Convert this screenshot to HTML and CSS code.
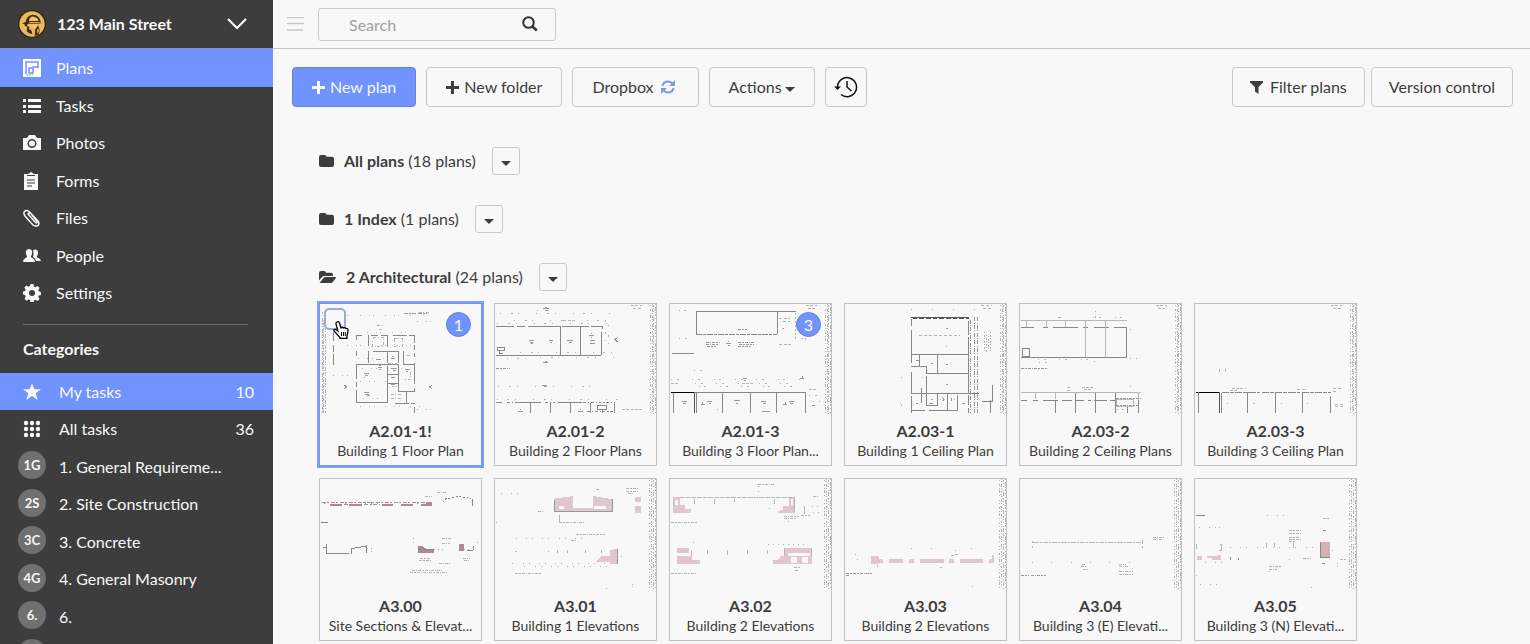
FILE: index.html
```html
<!DOCTYPE html>
<html lang="en">
<head>
<meta charset="utf-8">
<title>123 Main Street – Plans</title>
<link rel="stylesheet" href="styles.css">
</head>
<body>
<svg class="defs" aria-hidden="true">
  <symbol id="folder" viewBox="0 0 16 16"><path d="M0 4q0-2 2-2h3.500q2 0 2 1.800H13q2 0 2 2V12q0 2-2 2H2q-2 0-2-2z"/></symbol>
  <symbol id="folder-open" viewBox="0 0 18 16"><path d="M0 11.500V4q0-2 2-2h3q2 0 2 1.800h5q2 0 2 2V7H5.500Q4 7 3 8z"/><path d="M1 13.500 4.500 9q.7-1 2-1H16q1.500 0 .7 1.200L13.800 13q-.8 1-2 1H1.500q-1 0-.5-.5z"/></symbol>
  <symbol id="plus" viewBox="0 0 13 13"><path d="M5 0h3v5h5v3H8v5H5V8H0V5h5z"/></symbol>
  <symbol id="caret" viewBox="0 0 10 5"><path d="M0 0h10L5 5z"/></symbol>
  <symbol id="margin" viewBox="0 0 24 330">
    <path class="lt" stroke-dasharray="3 9 6 6 3 3 9 6 3 12 3 6" d="M4 3v327"/>
    <path class="lt" stroke-dasharray="3 3 3 6 9 3 3 6 6 3" d="M10 0v330"/>
    <path class="lt" stroke-dasharray="6 3 3 6 3 9 3 3 12 6" d="M15 2v328"/>
    <path class="lt" stroke-dasharray="3 6 12 3 3 3 6 6 3 9" d="M21 0v330"/>
  </symbol>
</svg>

<div class="app">
  <aside class="sidebar">
    <button class="project" type="button">
      <svg class="logo" viewBox="0 0 84 84"><circle cx="42" cy="42" r="40" fill="#e9b95a" stroke="#2f2414" stroke-width="4"/><path d="M12 42q6-5 11-6 3-20 21-22 21 1 24 22l-1 5H30q-3 4-3 7l7 2-1 8 7 3 3 12q-12-2-17-10l2-13-7-2-2-6z" fill="#3a2c18"/><path d="M33 30q4-12 15-10 12 3 14 13H33zM34 36l32 1-1 3-31-1z" fill="#f0c36b"/><path d="M40 44h22l-3 10-8 3-3-5h-6z" fill="#f3c878"/><path d="m52 58 8-12 5 14-3 14-12 4z" fill="#3a2c18"/><path d="m57 60 4-5 2 8-4 9z" fill="#e9b95a"/></svg>
      <span class="project-name">123 Main Street</span>
      <svg class="chevron" viewBox="0 0 20 12"><path d="m1 1 9 9 9-9" fill="none" stroke="#fff" stroke-width="2"/></svg>
    </button>

    <nav class="menu" aria-label="Project">
      <a class="item active" href="#"><svg class="nav-icon" viewBox="0 0 18 18"><path fill="#fff" d="M0 0h18v18H0z"/><path d="M3 15V3h12v5h-5v6H6V9h3" fill="none" stroke="#7093ff" stroke-width="1.500"/><path d="M3 16h7M15 8v1" stroke="#7093ff" stroke-dasharray="2 1"/></svg>Plans</a>
      <a class="item" href="#"><svg class="nav-icon" viewBox="0 0 18 18"><path d="M0 2h3v3H0zM5 2h13v3H5zM0 8h3v3H0zM5 8h13v3H5zM0 13h3v3H0zM5 13h13v3H5z"/></svg>Tasks</a>
      <a class="item" href="#"><svg class="nav-icon" viewBox="0 0 18 18"><path fill-rule="evenodd" d="M0 4h4l2-3h6l2 3h4v12H0zM9 5a4.500 4.500 0 1 0 0 9 4.500 4.500 0 0 0 0-9zm0 1.500a3 3 0 1 1 0 6 3 3 0 0 1 0-6z"/></svg>Photos</a>
      <a class="item" href="#"><svg class="nav-icon" viewBox="0 0 18 18"><path d="M1 2h4l3-2 3 2h4v16H1z"/><path d="M4 3.500h8M4 8h8M4 11h8M4 14h5" stroke="#3d3d3d" fill="none"/></svg>Forms</a>
      <a class="item" href="#"><svg class="nav-icon" viewBox="0 0 18 18"><path d="m5 5 7.500 8.500q1.500 1 2-.5L7 3.500Q4 0 1.500 2.500 0 4 2 7l7.500 8.500Q12 18 15 16.500q2-2 0-4.500L8 4.500Q6 3.500 5 5z" fill="none" stroke="#f8f8f8" stroke-width="1.500"/></svg>Files</a>
      <a class="item" href="#"><svg class="nav-icon" viewBox="0 0 18 18"><path d="M0 15q0-3 2.500-4 2-.6 1.500-2Q2.500 7 3 4q.6-2 3-2t3 2q.5 3-1 5-.3 1.500 1.500 2 2.500 1 2.500 4z"/><path d="M10 3.500q1-1.300 2.800-1 2.700.5 2.300 3.500-.2 2-1.300 3.200-.2 1.300 1.500 1.800 2.500.8 2.700 3h-5q-.5-3-3-4 1-4 0-6.500z"/></svg>People</a>
      <a class="item" href="#"><svg class="nav-icon" viewBox="0 0 18 18"><path fill-rule="evenodd" d="M7.500 0h3l.5 2.500 1.500.7L14.600 2l2 2-1.300 2 .7 1.500 2.500.5v3l-2.500.5-.7 1.500 1.300 2-2 2-2.100-1.300-1.500.7-.5 2.100h-3L7 16l-1.500-.6-2 1.300-2-2 1.200-2.100L2 11 0 10.500v-3L2 7l.6-1.500-1.200-2 2-2 2.100 1.200L7 2zM9 6a3 3 0 1 0 0 6 3 3 0 0 0 0-6z"/></svg>Settings</a>
    </nav>

    <h2 class="categories-title">Categories</h2>
    <nav class="menu tasks" aria-label="Categories">
      <a class="item active" href="#"><span class="mark"><svg class="nav-icon" viewBox="0 0 18 18"><path d="m9 0 2.300 6.300H18l-5.300 4 2 6.700L9 13l-5.700 4 2-6.700L0 6.300h6.700z"/></svg></span><span class="name">My tasks</span><span class="count">10</span></a>
      <a class="item" href="#"><span class="mark"><svg class="nav-icon" viewBox="0 0 18 18"><circle cx="3" cy="3" r="2.200"/><circle cx="9" cy="3" r="2.200"/><circle cx="15" cy="3" r="2.200"/><circle cx="3" cy="9" r="2.200"/><circle cx="9" cy="9" r="2.200"/><circle cx="15" cy="9" r="2.200"/><circle cx="3" cy="15" r="2.200"/><circle cx="9" cy="15" r="2.200"/><circle cx="15" cy="15" r="2.200"/></svg></span><span class="name">All tasks</span><span class="count">36</span></a>
      <a class="item" href="#"><span class="mark round">1G</span><span class="name">1. General Requireme...</span></a>
      <a class="item" href="#"><span class="mark round">2S</span><span class="name">2. Site Construction</span></a>
      <a class="item" href="#"><span class="mark round">3C</span><span class="name">3. Concrete</span></a>
      <a class="item" href="#"><span class="mark round">4G</span><span class="name">4. General Masonry</span></a>
      <a class="item" href="#"><span class="mark round">6.</span><span class="name">6.</span></a>
      <a class="item" href="#" aria-label="More categories"><span class="mark round"></span></a>
    </nav>
  </aside>

  <div class="page">
    <header class="topbar">
      <button class="toggle" type="button" aria-label="Toggle sidebar"><svg viewBox="0 0 17 14"><path d="M0 .5h17M0 6.500h17M0 13h16" stroke="#c8c8c8" stroke-width="1.500"/></svg></button>
      <form class="search">
        <input type="text" placeholder="Search" aria-label="Search">
        <button type="button" aria-label="Run search"><svg viewBox="0 0 16 16"><circle cx="6.500" cy="6.500" r="5.300" fill="none" stroke="#333" stroke-width="2"/><path d="m10.500 10.500 4.300 4" stroke="#333" stroke-width="2.500"/></svg></button>
      </form>
    </header>

    <main class="content">
      <div class="toolbar">
        <button class="btn primary" type="button"><svg class="plus"><use href="#plus"/></svg>New plan</button>
        <button class="btn" type="button"><svg class="plus"><use href="#plus"/></svg>New folder</button>
        <button class="btn dropbox" type="button">Dropbox<svg class="sync" viewBox="0 0 14 14"><path d="M1.500 6Q2.500 1.500 7 1.500q3 0 4.500 2.500M12.500 8Q11.500 12.500 7 12.500 4 12.500 2.500 10" fill="none" stroke="#7d9be0" stroke-width="2"/><path d="M14 0v6H8zM0 14V8h6z" fill="#7d9be0"/></svg></button>
        <button class="btn actions" type="button">Actions<svg class="caret"><use href="#caret"/></svg></button>
        <button class="btn square" type="button" aria-label="History"><svg viewBox="0 0 24 22"><path d="M3.500 11A9.500 9.500 0 1 1 7 18.500M13 5v6l4.500 4" fill="none" stroke="#111" stroke-width="1.500"/><path d="M0 10.500h7L3.500 14z" fill="#111"/></svg></button>
        <span class="spacer"></span>
        <div class="group">
          <button class="btn tight" type="button"><svg class="filter" viewBox="0 0 13 13"><path d="M0 0h13v1.500L8.500 6v7L5 10.500V6L0 1.500z"/></svg>Filter plans</button>
          <button class="btn tight" type="button">Version control</button>
        </div>
      </div>

      <div class="folders">
        <div class="folder"><svg class="folder-icon"><use href="#folder"/></svg><p><b>All plans</b> (18 plans)</p><button type="button" aria-label="All plans options"><svg class="caret"><use href="#caret"/></svg></button></div>
        <div class="folder"><svg class="folder-icon"><use href="#folder"/></svg><p><b>1 Index</b> (1 plans)</p><button type="button" aria-label="1 Index options"><svg class="caret"><use href="#caret"/></svg></button></div>
        <div class="folder"><svg class="folder-icon open"><use href="#folder-open"/></svg><p><b>2 Architectural</b> (24 plans)</p><button type="button" aria-label="2 Architectural options"><svg class="caret"><use href="#caret"/></svg></button></div>
      </div>

      <div class="plans">
        <article class="card selected">
          <svg class="thumb" viewBox="30 28 483 330">
            <g class="lt"><path stroke-dasharray="6 3 3 6 12 3" d="M36 52v304M47 100v256"/><path stroke-dasharray="3 3 9 4" d="M41 75v281"/>
              <path stroke-dasharray="9 4 3 6" d="M326 52h30M202 92h17M206 104h14M190 128h30v26h-34zM252 130h26v24h-26zM290 182h14M234 205h26M284 225h16v30h-16M246 275h18M242 300h34M242 310h34"/>
              <path stroke-dasharray="3 24 3 11 3 31" d="M74 62h250M170 112h150M110 122h210M110 152h220M145 190h80M156 220h140M70 243h50M150 260h90M160 310h60M150 335h180M320 80h60M320 345h50"/></g>
            <path class="md" stroke-dasharray="12 3 5 3" d="M282 57h36M324 57h26"/>
            <path class="ln" d="M139 122v14M139 122h18M175 120v35M184 123h20M214 123h18v35M248 122h40M298 122h14v22M312 152v14M312 176v12M312 205v62M312 279v12M312 336v20M140 170v13M175 170v36M190 170h75v36M233 172v34M281 170v38h30M140 208h125v82h48M140 208v44M140 262v16M140 286v37M233 214v110h-94M254 325h42M302 325h12M290 292v32M233 238h32M233 265h32M70 111v28M70 150v22M70 177v34"/>
            <g class="md"><path d="M162 236h14M164 242h9M161 247h4M162 293h15M165 298h12M171 302h8M205 218h11M208 213h5M208 223h4M102 271l8 6-8 6M367 271l-9 6 9 6M285 225h13M289 230h5M243 191h12M245 186h8M197 195h16M244 222h14M248 228h9M244 248h12M244 270h10"/></g>
          </svg>
          <input class="tick" type="checkbox" aria-label="Select A2.01-1!">
          <span class="badge">1</span>
          <svg class="pointer" viewBox="0 0 16 18"><path d="M4 1q2-1 2.500 1L8 7q1.500-1.500 2.500 0 1.600-1 2.300.5 2.200-.5 2.200 2l-1 6v2H7v-1L1 10q-.5-2 1.500-1.500L5 10 3 3q-.3-1.400 1-2z" fill="#fff" stroke="#000" stroke-width="1.300"/><path d="M8.500 11v4M10.500 11v4M12.300 11v4" stroke="#000"/></svg>
          <h3>A2.01-1!</h3><p>Building 1 Floor Plan</p>
        </article>

        <article class="card">
          <svg class="thumb" viewBox="555 28 483 330">
            <use href="#margin" x="1016" y="28" width="24" height="330"/>
            <path class="ln" d="M558 94h54M620 94h26M655 94h94M755 94h82M842 94h34v10M558 181h316M875 112v69M752 94v87M811 94v87M562 158h20v10h-20zM568 168v8h10M558 324h19M625 324h68M745 324h70M661 324v32M721 324v32M781 324v32M840 324v32M913 324v32M862 333h28v10h-28zM877 343v13"/>
            <path class="ln" stroke-dasharray="8 6 4 5" d="M592 324h33M705 324h34M820 324h96M832 350h82"/>
            <g class="md"><path d="M700 42h16M704 37h8M704 47h7M700 204h14M704 199h7M697 271h14M701 276h6M657 137h15M660 142h9M664 147h5M716 137h14M720 142h6M772 136h18M778 142h7M838 122h13M842 117h5M842 127h5M840 138h14M840 146h14M923 129l-9 6 9 6M625 350h14M630 345h4M805 350h14M810 345h4"/><path stroke-dasharray="9 3 5 3" d="M558 222h42"/></g>
            <g class="lt"><path stroke-dasharray="9 4" d="M963 32h34M970 40h26M760 77h34M936 345h62"/><path stroke-dasharray="3 29 6 17 3 51" d="M570 55h350M680 48h50M612 76h300M562 85h350M690 188h230M590 190h100M630 174h300M565 276h310M560 313h370M885 80v110M895 90v100"/></g>
          </svg>
          <h3>A2.01-2</h3><p>Building 2 Floor Plans</p>
        </article>

        <article class="card">
          <svg class="thumb" viewBox="30 28 483 330">
            <use href="#margin" x="491" y="28" width="24" height="330"/>
            <path class="rose" d="M110 49h241v69"/>
            <path class="ln" d="M108 49h243v69M108 49v69M36 175h66M351 49h58M105 292h332M109 292v64M187 292v64M270 292v64M350 292v64M436 292v64M40 292v64"/>
            <path class="ln" stroke-dasharray="18 4 8 3" d="M108 118h243"/>
            <path class="bk" d="M33 292h72"/><path class="dk" d="M104 292v64"/>
            <g class="md"><path stroke-dasharray="9 3 5 3" d="M137 142h42M137 148h36M142 154h26M234 142h50M238 148h44M235 154h42M234 103h26"/><path d="M199 146h13M203 140h4M203 151h6M250 251h12M253 258h6M421 252h11M426 245v5M66 320h15M70 326h8M122 328h14M127 322v10M141 320h16M146 326h6M222 318h17M227 325h8M304 319h14M309 327h8M368 328h14M375 322v10M386 320h16M390 326h8M456 333h9M306 349h23"/></g>
            <g class="lt"><path stroke-dasharray="9 4" d="M438 33h32M443 40h26M358 72h32M370 80h20M358 148h34M245 265h34M33 265h22M447 283h24"/><path stroke-dasharray="3 14 6 41" d="M56 48h50M57 130h50M350 100h30M103 227h60M33 254h400M105 265h300M116 274h310M447 302h30M460 320h20M170 345h10M405 130h30"/><path stroke-dasharray="6 6" d="M407 55v80M437 70v70"/></g>
          </svg>
          <span class="badge">3</span>
          <h3>A2.01-3</h3><p>Building 3 Floor Plan...</p>
        </article>

        <article class="card">
          <svg class="thumb" viewBox="555 28 483 330">
            <use href="#margin" x="1016" y="28" width="24" height="330"/>
            <path class="dk" d="M753 67h175"/><path class="dk" stroke-dasharray="14 6" d="M758 71h170"/>
            <path class="ln" d="M754 72v22M754 105v72M754 178h174M926 78v42M926 128v167M754 178v28M754 214h46M778 180v33M832 180v55M800 214v22h126M754 232v63M800 245v50M754 295h204M754 346h42M806 346h88M800 295v38h32v-38M785 280v45M862 295v51M892 300v46M754 305v50M926 302v30M926 340v16M998 272v50M965 320h34M990 315v40"/>
            <path class="md" stroke-dasharray="12 4 3 4" d="M931 75v281M943 68v288M952 68v288"/>
            <g class="lt"><path stroke-dasharray="9 6" d="M963 32h34M970 40h26M777 122h124"/><path stroke-dasharray="3 6 6 3" d="M972 112v60M978 120v52M984 125v45M990 112v60M720 325h10M722 333h8M840 314h16M846 308v12M874 314h10"/><path stroke-dasharray="3 60" d="M753 45h250M723 248h100M859 155h60"/></g>
            <path class="md" d="M768 198h8M812 205h6M859 210h6M859 269h6M859 100h5M814 314h6M849 309v10M875 309v10M768 325h6M906 325h8M808 325h10"/>
          </svg>
          <h3>A2.03-1</h3><p>Building 1 Ceiling Plan</p>
        </article>

        <article class="card">
          <svg class="thumb" viewBox="30 28 483 330">
            <use href="#margin" x="491" y="28" width="24" height="330"/>
            <path class="ln" d="M33 187h317M349 98v89M37 160h22v24H37zM33 99h38M99 99h16M130 99h73M220 99h15M252 99h44M312 99h37M136 316v40M196 292v64M256 292v64M316 292v64M33 316h18M69 316h14M99 316h45M157 316h28M197 316h26M234 316h10M252 316h38M300 316h17M386 316v40M352 336v20"/>
            <path class="sf" d="M33 76h317M226 76v110M286 76v110M48 78v20M109 78v18M167 78v18M33 292h359M76 292v22M136 292v22M320 314h50v20h-50zM386 292v24"/>
            <path class="md" stroke-dasharray="9 3 5 3" d="M33 221h77M318 312h74M318 333h68"/>
            <g class="lt"><path stroke-dasharray="9 4" d="M438 33h32M443 40h26M145 67h10M215 277h34M222 284h26M170 277h12M170 286h12"/><path stroke-dasharray="3 14 6 41" d="M250 67h110M257 48v25M84 195h180M88 202h32M252 200h12M361 103h14M361 190h20M361 274h5M320 345h60"/></g>
          </svg>
          <h3>A2.03-2</h3><p>Building 2 Ceiling Plans</p>
        </article>

        <article class="card">
          <svg class="thumb" viewBox="555 28 483 330">
            <use href="#margin" x="1016" y="28" width="24" height="330"/>
            <path class="bk" d="M558 292h73"/><path class="dk" d="M629 292v64"/>
            <path class="ln" d="M565 292v64M635 295v61M713 292v64M795 292v64M876 292v64M961 305v50"/>
            <path class="ln" stroke-dasharray="22 3 11 4" d="M635 292h328"/>
            <g class="lt"><path stroke-dasharray="9 4" d="M963 32h34M970 40h26M665 281h42M660 286h20M862 283h30M970 282h24M970 290h12M976 328h24M976 334h24"/><path d="M629 223v8M646 223v8M651 325h3M730 325h6M812 325h4M890 325h3"/></g>
          </svg>
          <h3>A2.03-3</h3><p>Building 3 Ceiling Plan</p>
        </article>

        <article class="card">
          <svg class="thumb" viewBox="30 28 481 330">
            <g class="wine"><path d="M59 102h36v6H59zM117 102h38v6h-38zM214 102h35v6h-35zM273 102h36v6h-36zM333 102h33v6h-33zM348 97h18v8h-18zM324 230h12l14 8h20v12h-46zM445 223h17v20h-17z"/></g>
            <path class="md" stroke-dasharray="12 4 7 4" d="M34 98h330M162 104h46M100 104h14"/>
            <path class="md" stroke-dasharray="5 6" d="M42 98v10M104 98v10M166 98v10M184 98v10M200 98v10M322 98v10"/>
            <path class="ln" d="M38 232h8M48 224v26h68M124 252v-15l44-8v20M108 252h8M33 157h20M486 88v20M488 240v-10M470 241h18M324 230v20M338 238h30"/>
            <path class="ln" stroke-dasharray="6 5" d="M398 98l8-11 38-6 38 5"/>
            <g class="lt"><path stroke-dasharray="9 3 4 3" d="M379 67h32M344 79h20M394 206h28M394 220h24M330 265h32M327 271h34M386 280h34M457 265h22M460 271h18M300 308h110M305 303h90"/><path stroke-dasharray="3 9" d="M310 204v18M370 238h30M170 235h14v12M500 217h10M460 238h22"/></g>
          </svg>
          <h3>A3.00</h3><p>Site Sections &amp; Elevat...</p>
        </article>

        <article class="card">
          <svg class="thumb" viewBox="553 28 481 330">
            <use href="#margin" x="1011" y="28" width="24" height="330"/>
            <path class="pk" fill-rule="evenodd" d="M730 87l57-8v36h58V79l60 10v36H730zM745 110h15v7h-15zM850 110h34v7h-34zM972 81h17v17h-17zM972 108h17v23h-17zM856 278v-5l16-13h24v-18l22-5v46h-22v-5z"/>
            <path class="md" d="M730 90v35h175V88M918 238v44"/>
            <g class="lt"><path stroke-dasharray="9 3 5 3" d="M795 195h88M945 57h38M945 64h38M950 70h20M745 157h74M612 311h80M856 58h10M682 125h14M780 212h16"/><path stroke-dasharray="3 28 3 15" d="M570 70h60M556 157h10M614 206h210M604 280h280M640 290h250M884 355h5M964 344h5M964 351h5M930 260h10M866 290h10"/><path d="M612 244h6M710 244h4M739 241v8M768 241v8M824 241v8M872 241v8M746 135v24"/></g>
          </svg>
          <h3>A3.01</h3><p>Building 1 Elevations</p>
        </article>

        <article class="card">
          <svg class="thumb" viewBox="1076 28 481 330">
            <use href="#margin" x="1534" y="28" width="24" height="330"/>
            <path class="pk" fill-rule="evenodd" d="M1085 82h20v25h15v11h18v12h-53zM1090 90v16h8V90zM1432 82h19v48h-52v-6l16-4v-12h17zM1437 88v17h8V88zM1096 235h36v16h-36zM1096 260h46v10h22v14h-68zM1418 235h84v49h-118v-13h12l14-13h8zM1428 250v10h68v-10zM1438 262h18v18h-18zM1470 262h18v18h-18z"/>
            <path class="sf" stroke-dasharray="14 3" d="M1105 82h345"/>
            <path class="sf" d="M1149 88v16M1208 88v14M1268 88v10M1387 88v14M1085 88v20M1449 88v40M1477 110v22M1140 240v18M1187 240v12M1246 242v14M1306 240v14M1366 242v12M1418 236v20M1500 236v24"/>
            <g class="lt"><path stroke-dasharray="9 3 5 3" d="M1339 44h52M1078 157h78M1078 311h74M1505 80h15M1416 140h46M1416 147h40M1468 138h26M1447 292h22M1450 303h12"/><path stroke-dasharray="3 12" d="M1340 50v16M1373 115v14M1144 217h4M1370 225h120M1500 110h20M1430 155h5M1505 128h20"/></g>
          </svg>
          <h3>A3.02</h3><p>Building 2 Elevations</p>
        </article>

        <article class="card">
          <svg class="thumb" viewBox="30 28 481 330">
            <use href="#margin" x="489" y="28" width="24" height="330"/>
            <path class="pk" d="M108 258h23v9h12v12h-11v3h-24zM161 267h42v12h-42zM221 267h15v12h-15zM254 267h72v12h-72zM340 267h15v12h-15zM373 267h69v12h-69zM460 267h10v-10h5v23h-15z"/>
            <path class="md" stroke-dasharray="9 3 5 3" d="M33 310h78M33 316h12"/>
            <g class="lt"><path d="M58 253h3M66 270h3M228 235h3M288 235h3M406 235h3M358 242h3M347 257h8M127 287v6M315 292h5M409 349h3M360 255h7"/></g>
          </svg>
          <h3>A3.03</h3><p>Building 2 Elevations</p>
        </article>

        <article class="card">
          <svg class="thumb" viewBox="553 28 481 330">
            <use href="#margin" x="1011" y="28" width="24" height="330"/>
            <path class="sf" stroke-dasharray="16 3 6 3" d="M592 217h327"/>
            <g class="lt"><path d="M590 215v6M590 228v8M919 212v10M919 228v8"/><path stroke-dasharray="3 55" d="M588 277h332"/><path stroke-dasharray="9 3 5 3" d="M950 208h30M950 203h34M739 284h12M735 291h14M740 298h20M848 284h22M848 291h30M848 304h44M848 313h44"/></g>
            <path class="md" stroke-dasharray="9 3 5 3" d="M556 316h22M584 316h46"/>
          </svg>
          <h3>A3.04</h3><p>Building 3 (E) Elevati...</p>
        </article>

        <article class="card">
          <svg class="thumb" viewBox="1076 28 481 330">
            <use href="#margin" x="1534" y="28" width="24" height="330"/>
            <path class="pk" d="M1081 258h14v12h-14zM1111 258h34v-3h7v15h-27v-4h-14z"/>
            <path class="rosefill" d="M1450 216h30v46h-30z"/>
            <path class="ln" d="M1450 216v46l30 0M1457 280h9M1458 181h9M1078 136h26M1180 262v8M1204 264v6"/>
            <g class="lt"><path d="M1079 223v14M1150 223h3v18h-6M1290 220v14M1313 220v12M1370 215v20"/><path stroke-dasharray="9 3 5 3" d="M1357 181h38M1357 190h38M1357 202h34M1357 210h38M1357 215h20M1296 291h38M1296 300h26M1460 145h18M1400 265h24M1510 268h20"/><path stroke-dasharray="3 28 3 15" d="M1180 233h270M1290 136h60M1087 172h70M1147 172h10M1078 316h10M1090 344h60M1105 277h70M1296 304h10M1356 268h10M1422 352h14M1485 243h10M1500 280h10M1500 290h10"/></g>
          </svg>
          <h3>A3.05</h3><p>Building 3 (N) Elevati...</p>
        </article>
      </div>
    </main>
  </div>
</div>
</body>
</html>
```

FILE: styles.css
```css
* { box-sizing: border-box; }
body {
  margin: 0;
  background: #f8f8f8;
  color: #3d3d3d;
  font: 16px/20px Lato, "Open Sans", sans-serif;
}
button, input { font: inherit; color: inherit; margin: 0; }
button { background: none; border: 0; padding: 0; }
h2, h3, p { margin: 0; }
a { color: inherit; text-decoration: none; }
svg { display: block; flex: none; fill: currentColor; }
.defs { position: absolute; width: 0; height: 0; }

.app { display: flex; height: 100vh; overflow: hidden; }

/* Sidebar */
.sidebar { flex: none; width: 273px; background: #3d3d3d; color: #f8f8f8; overflow: hidden; }
.project {
  display: flex;
  align-items: center;
  width: 100%;
  height: 49px;
  padding: 0 26px 0 18px;
  border-bottom: 1px solid #8493c4;
  text-align: left;
  font-weight: bold;
}
.logo { width: 28px; height: 28px; }
.project-name { flex: 1; margin-left: 11px; }
.chevron { width: 20px; height: 12px; }
.item { display: flex; align-items: center; height: 38px; padding-left: 23px; }
.menu .item:nth-child(even) { height: 37px; }
.item.active { background: #7093ff; }
.nav-icon { width: 18px; height: 18px; }
.menu > .item > .nav-icon { margin-right: 15px; }
.categories-title {
  margin: 12px 25px 0 23px;
  padding: 14px 0;
  border-top: 1px solid #6e6e6e;
  font-size: 16px;
  line-height: 20px;
}
.tasks .item { height: 37px; padding: 0 19px 0 18px; }
.tasks .item:nth-child(even) { height: 38px; }
.mark { flex: none; display: grid; place-items: center; width: 28px; height: 28px; }
.round { margin-bottom: 3px; border-radius: 50%; background: #707070; font-size: 13px; font-weight: bold; }
.name { flex: 1; margin-left: 13px; white-space: nowrap; }

/* Top bar */
.page { flex: 1; min-width: 0; display: flex; flex-direction: column; }
.topbar {
  flex: none;
  display: flex;
  align-items: center;
  gap: 14px;
  height: 49px;
  padding-left: 14px;
  border-bottom: 1px solid #c4c4c4;
}
.toggle svg { width: 17px; height: 14px; }
.search {
  display: flex;
  align-items: center;
  width: 238px;
  height: 33px;
  padding: 0 17px 0 30px;
  border: 1px solid #c8c8c8;
  border-radius: 3px;
}
.search input { flex: 1; min-width: 0; padding: 2px 0 0; border: 0; background: none; outline: 0; }
.search input::placeholder { color: #a0a0a0; opacity: 1; }
.search svg { width: 16px; height: 16px; }

/* Toolbar */
.content { flex: 1; min-height: 0; overflow: hidden; }
.toolbar { display: flex; gap: 10px; padding: 18px 17px 0 19px; }
.spacer { flex: 1; }
.group { display: flex; gap: 6px; }
.btn {
  display: flex;
  align-items: center;
  justify-content: center;
  gap: 5px;
  height: 40px;
  padding: 0 19px;
  border: 1px solid #c8c8c8;
  border-radius: 4px;
  white-space: nowrap;
}
.primary { background: #7093ff; border-color: #6c84c8; color: #f8f8f8; }
.tight { padding: 0 17px; }
.square { width: 42px; padding: 0; }
.square svg { width: 24px; height: 22px; }
.plus { width: 13px; height: 13px; }
.filter { width: 13px; height: 13px; margin-right: 2px; }
.dropbox { gap: 7px; padding-right: 23px; }
.actions { gap: 3px; }
.sync { width: 14px; height: 14px; }
.caret { width: 10px; height: 5px; margin-top: 4px; }

/* Folders */
.folders { display: grid; gap: 30px; padding: 40px 46px 12px; }
.folder { display: flex; align-items: center; height: 28px; }
.folder-icon { width: 16px; height: 16px; margin-right: 9px; }
.folder-icon.open { width: 18px; }
.folder button {
  display: grid;
  place-items: center;
  width: 28px;
  height: 28px;
  margin-left: 16px;
  border: 1px solid #c8c8c8;
  border-radius: 3px;
}

/* Plan cards */
.plans { display: grid; grid-template-columns: repeat(auto-fill, 163px); gap: 12px; padding: 0 0 12px 46px; }
.card { position: relative; border: 1px solid #c0c0c0; padding-bottom: 4px; text-align: center; }
.card.selected { border-color: #7394f2; box-shadow: 0 0 0 2px #7f9df2; }
.card h3 { margin-top: 7px; font-size: 16px; line-height: 20px; }
.card p { font-size: 14px; line-height: 20px; white-space: nowrap; }
.thumb { width: 100%; height: 110px; fill: none; shape-rendering: crispEdges; }
.badge {
  position: absolute;
  top: 8px;
  right: 10px;
  width: 25px;
  height: 25px;
  border: 1px solid #6380d8;
  border-radius: 50%;
  background: #7093ff;
  color: #f8f8f8;
  line-height: 23px;
}
.tick {
  position: absolute;
  top: 4px;
  left: 4px;
  width: 22px;
  height: 22px;
  appearance: none;
  border: 2px solid #98abdf;
  border-radius: 5px;
  background: #f8f8f8;
}
.pointer { position: absolute; top: 17px; left: 13px; width: 16px; height: 18px; }

/* Drawing strokes */
.lt, .md, .sf, .ln, .dk, .bk, .rose { fill: none; stroke-width: 3; }
.lt { stroke: #b4b4b4; }
.md { stroke: #989898; }
.sf { stroke: #b8b8b8; }
.ln { stroke: #888; }
.dk { stroke: #555; }
.bk { stroke: #000; }
.rose { stroke: #c9a5a5; }
.pk { fill: #dfc7cb; }
.wine { fill: #b3868c; }
.rosefill { fill: #d3b2b7; }
```
